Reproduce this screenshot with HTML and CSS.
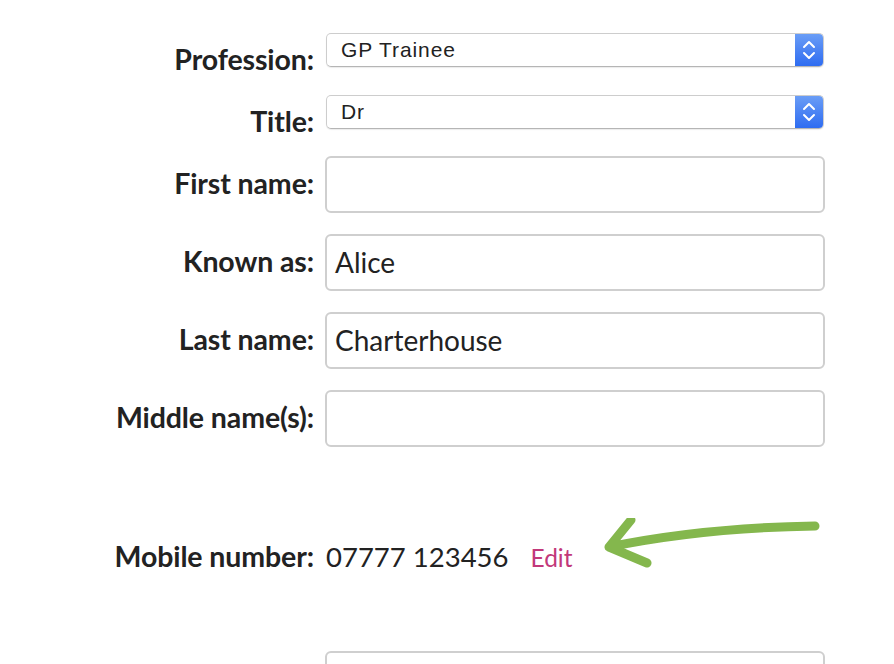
FILE: index.html
```html
<!DOCTYPE html>
<html>
<head>
<meta charset="utf-8">
<link rel="stylesheet" href="styles.css">
</head>
<body>
<form class="form">
  <div class="row row-select">
    <label class="label">Profession:</label>
    <div class="select"><span class="select-text">GP Trainee</span><span class="select-btn"><svg width="14" height="22" viewBox="0 0 14 22"><path d="M2 8 L7 3 L12 8 M2 14 L7 19 L12 14" fill="none" stroke="#fff" stroke-width="2" stroke-linecap="round" stroke-linejoin="round"/></svg></span></div>
  </div>
  <div class="row row-select">
    <label class="label">Title:</label>
    <div class="select"><span class="select-text">Dr</span><span class="select-btn"><svg width="14" height="22" viewBox="0 0 14 22"><path d="M2 8 L7 3 L12 8 M2 14 L7 19 L12 14" fill="none" stroke="#fff" stroke-width="2" stroke-linecap="round" stroke-linejoin="round"/></svg></span></div>
  </div>
  <div class="row row-input">
    <label class="label">First name:</label>
    <div class="input"></div>
  </div>
  <div class="row row-input">
    <label class="label">Known as:</label>
    <div class="input">Alice</div>
  </div>
  <div class="row row-input">
    <label class="label">Last name:</label>
    <div class="input">Charterhouse</div>
  </div>
  <div class="row row-input">
    <label class="label">Middle name(s):</label>
    <div class="input"></div>
  </div>
  <div class="row row-mobile">
    <label class="label">Mobile number:</label>
    <div class="mobile"><span class="mobile-value">07777 123456</span><a class="edit">Edit</a></div>
    <svg class="arrow" width="240" height="60" viewBox="0 0 240 60"><path d="M223 8 C 160 9, 90 14, 17 29 M39 2 L17 29 L55 45" fill="none" stroke="#84b74d" stroke-width="9" stroke-linecap="round" stroke-linejoin="round"/></svg>
  </div>
  <div class="row row-input last">
    <label class="label"></label>
    <div class="input"></div>
  </div>
</form>
</body>
</html>
```
FILE: styles.css
```css
html, body {
  margin: 0;
  padding: 0;
  background: #fff;
  overflow: hidden;
}
body {
  font-family: Lato, "Open Sans", sans-serif;
  color: #222;
}
.form {
  padding-top: 33px;
}
.row {
  display: flex;
  align-items: flex-start;
  position: relative;
}
.row-select { height: 62px; }
.row-input { height: 78px; }
.label {
  width: 314px;
  flex: none;
  text-align: right;
  font-weight: 700;
  font-size: 28.5px;
  line-height: 53px;
  padding-right: 0;
  box-sizing: border-box;
  letter-spacing: -0.1px;
}
.select {
  width: 498px;
  height: 34px;
  box-sizing: border-box;
  border: 1px solid #cdcdcd;
  border-bottom-color: #b5b5b5;
  border-radius: 5px;
  display: flex;
  align-items: center;
  box-shadow: 0 1px 1px rgba(0,0,0,0.08);
  overflow: hidden;
  margin-left: 12px;
}
.select-text {
  flex: 1;
  padding-left: 14px;
  font-family: "Liberation Sans", Arial, sans-serif;
  font-size: 21px;
  letter-spacing: 0.9px;
  color: #222;
}
.select-btn {
  width: 28px;
  height: 100%;
  background: linear-gradient(#6a9df6, #2e6cf1);
  display: flex;
  align-items: center;
  justify-content: center;
}
.input {
  width: 500px;
  height: 57px;
  box-sizing: border-box;
  border: 2px solid #cfcfcf;
  border-radius: 6px;
  padding-left: 8px;
  font-size: 28px;
  line-height: 53px;
  color: #222;
  margin-left: 11px;
  margin-top: -1px;
}
.row-mobile {
  height: 56px;
  margin-top: 59px;
  margin-bottom: 68px;
  align-items: center;
}
.row-mobile .label { line-height: 56px; }
.mobile {
  margin-left: 12px;
  display: flex;
  align-items: baseline;
}
.mobile-value {
  font-size: 27.5px;
}
.edit {
  font-size: 24.5px;
  color: #c2387a;
  margin-left: 22px;
}
.arrow {
  position: absolute;
  left: 592px;
  top: -10px;
}
```
